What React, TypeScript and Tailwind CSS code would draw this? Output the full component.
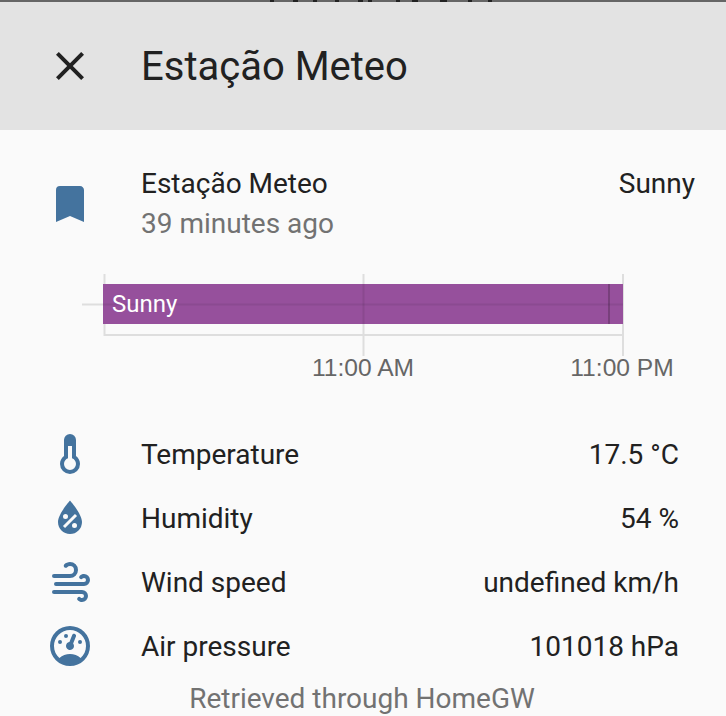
import React from 'react';

const ICONS = {
  close: 'M19,6.41L17.59,5L12,10.59L6.41,5L5,6.41L10.59,12L5,17.59L6.41,19L12,13.41L17.59,19L19,17.59L13.41,12L19,6.41Z',
  bookmark: 'M17,3H7A2,2 0 0,0 5,5V21L12,18L19,21V5C19,3.89 18.1,3 17,3Z',
  thermometer: 'M17,17A5,5 0 0,1 12,22A5,5 0 0,1 7,17C7,15.36 7.79,13.91 9,13V5A3,3 0 0,1 12,2A3,3 0 0,1 15,5V13C16.21,13.91 17,15.36 17,17M11,8V14.17C9.83,14.58 9,15.69 9,17A3,3 0 0,0 12,20A3,3 0 0,0 15,17C15,15.69 14.17,14.58 13,14.17V8H11Z',
  humidity: 'M12,3.25C12,3.25 6,10 6,14C6,17.32 8.69,20 12,20A6,6 0 0,0 18,14C18,10 12,3.25 12,3.25M14.47,9.97L15.53,11.03L9.53,17.03L8.47,15.97M9.75,10A1.25,1.25 0 0,1 11,11.25A1.25,1.25 0 0,1 9.75,12.5A1.25,1.25 0 0,1 8.5,11.25A1.25,1.25 0 0,1 9.75,10M14.25,14.5A1.25,1.25 0 0,1 15.5,15.75A1.25,1.25 0 0,1 14.25,17A1.25,1.25 0 0,1 13,15.75A1.25,1.25 0 0,1 14.25,14.5Z',
  wind: 'M4,10A1,1 0 0,1 3,9A1,1 0 0,1 4,8H12A2,2 0 0,0 14,6A2,2 0 0,0 12,4C11.45,4 10.95,4.22 10.59,4.59C10.2,5 9.56,5 9.17,4.59C8.78,4.2 8.78,3.56 9.17,3.17C9.9,2.45 10.9,2 12,2A4,4 0 0,1 16,6A4,4 0 0,1 12,10H4M19,12A1,1 0 0,0 20,11A1,1 0 0,0 19,10C18.72,10 18.47,10.11 18.29,10.29C17.9,10.68 17.27,10.68 16.88,10.29C16.5,9.9 16.5,9.27 16.88,8.88C17.42,8.34 18.17,8 19,8A3,3 0 0,1 22,11A3,3 0 0,1 19,14H5A1,1 0 0,1 4,13A1,1 0 0,1 5,12H19M18,18H4A1,1 0 0,1 3,17A1,1 0 0,1 4,16H18A3,3 0 0,1 21,19A3,3 0 0,1 18,22C17.17,22 16.42,21.66 15.88,21.12C15.5,20.73 15.5,20.1 15.88,19.71C16.27,19.32 16.9,19.32 17.29,19.71C17.47,19.89 17.72,20 18,20A1,1 0 0,0 19,19A1,1 0 0,0 18,18Z',
  gauge: 'M12,2A10,10 0 0,0 2,12A10,10 0 0,0 12,22A10,10 0 0,0 22,12A10,10 0 0,0 12,2M12,4A8,8 0 0,1 20,12C20,14.4 19,16.5 17.3,18C15.9,16.7 14,16 12,16C10,16 8.2,16.7 6.7,18C5,16.5 4,14.4 4,12A8,8 0 0,1 12,4M14,5.89C13.62,5.9 13.26,6.15 13.1,6.54L11.81,9.77L11.71,10C11,10.13 10.41,10.6 10.14,11.26C9.73,12.29 10.23,13.45 11.26,13.86C12.29,14.27 13.45,13.77 13.86,12.74C14.12,12.08 14,11.32 13.57,10.76L13.67,10.5L14.96,7.29L14.97,7.26C15.17,6.75 14.92,6.17 14.41,5.96C14.28,5.91 14.15,5.89 14,5.89M10,6A1,1 0 0,0 9,7A1,1 0 0,0 10,8A1,1 0 0,0 11,7A1,1 0 0,0 10,6M7,9A1,1 0 0,0 6,10A1,1 0 0,0 7,11A1,1 0 0,0 8,10A1,1 0 0,0 7,9M17,9A1,1 0 0,0 16,10A1,1 0 0,0 17,11A1,1 0 0,0 18,10A1,1 0 0,0 17,9Z',
};

const Icon = ({ d, className }: { d: string; className: string }) => (
  <svg viewBox="0 0 24 24" width="48" height="48" fill="currentColor" className={`shrink-0 ${className}`}>
    <path d={d} />
  </svg>
);

const ATTRS = [
  { icon: ICONS.thermometer, label: 'Temperature', value: '17.5 °C' },
  { icon: ICONS.humidity, label: 'Humidity', value: '54 %' },
  { icon: ICONS.wind, label: 'Wind speed', value: 'undefined km/h' },
  { icon: ICONS.gauge, label: 'Air pressure', value: '101018 hPa' },
];

// the bottom of the page title behind the dialog pokes out over the top edge
const TopEdge = () => (
  <svg width="726" height="2" viewBox="0 0 726 2" className="block bg-[#666666]">
    <path
      d="M270 0h4v2h-4zM293 0h5v2h-5zM313 0h4v2h-4zM335 0h4v2h-4zM358 0h5v2h-5zM368 0h4v2h-4zM396 0h4v2h-4zM412 0h6v2h-6zM440 0h7v2h-7zM468 0h4v2h-4zM488 0h4v2h-4z"
      fill="#222"
    />
  </svg>
);

const Timeline = () => (
  <svg width="726" height="130" viewBox="0 0 726 130" className="block">
    {/* grid lines */}
    <path d="M104.500 14V76M363.500 14V96M623 14V96M82 44.500H623M104 75H623" stroke="#dedede" strokeWidth="2" fill="none" />
    <rect x="103" y="24" width="520" height="40" fill="#96509c" />
    <path d="M103 44.500H623" stroke="#000" strokeOpacity="0.07" strokeWidth="2" />
    <path d="M363.500 24V64" stroke="#000" strokeOpacity="0.08" strokeWidth="2" />
    <path d="M609 24V64" stroke="#000" strokeOpacity="0.2" strokeWidth="2" />
    <text x="112" y="52" fill="#fff" fontSize="24" fontFamily="Roboto, sans-serif">Sunny</text>
    <text x="363" y="116" fill="#666" fontSize="24.6" textAnchor="middle" fontFamily="'Liberation Sans', Arial, sans-serif">11:00 AM</text>
    <text x="622" y="116" fill="#666" fontSize="24.6" textAnchor="middle" fontFamily="'Liberation Sans', Arial, sans-serif">11:00 PM</text>
  </svg>
);

export default function App() {
  return (
    <div className="w-[726px] h-[716px] overflow-hidden bg-[#fafafa] font-['Roboto',sans-serif] text-[#212121] antialiased">
      <TopEdge />
      <header className="h-[128px] bg-[#e3e3e3] flex items-center pl-[46px]">
        <Icon d={ICONS.close} className="text-[#212121]" />
        <h1 className="ml-[47px] pt-[2px] text-[40px] leading-[48px] font-normal">Estação Meteo</h1>
      </header>

      <section className="flex pl-[46px] pr-[31px] pt-[34px]">
        <Icon d={ICONS.bookmark} className="text-[#44739e] mt-[16px]" />
        <div className="ml-[47px] flex-1">
          <div className="text-[28px] leading-[40px]">Estação Meteo</div>
          <div className="text-[28px] leading-[40px] text-[#727272]">39 minutes ago</div>
        </div>
        <div className="text-[28px] leading-[40px]">Sunny</div>
      </section>

      <div className="mt-[16px]">
        <Timeline />
      </div>

      <section className="mt-[40px] pl-[46px] pr-[47px] flex flex-col gap-[16px]">
        {ATTRS.map((a) => (
          <div key={a.label} className="flex items-center h-[48px]">
            <Icon d={a.icon} className="text-[#44739e]" />
            <span className="ml-[47px] pt-[2px] flex-1 text-[28px]">{a.label}</span>
            <span className="pt-[2px] text-[28px]">{a.value}</span>
          </div>
        ))}
      </section>

      <div className="mt-[9px] pr-[2px] text-center text-[28px] leading-[40px] text-[#727272]">Retrieved through HomeGW</div>
    </div>
  );
}
